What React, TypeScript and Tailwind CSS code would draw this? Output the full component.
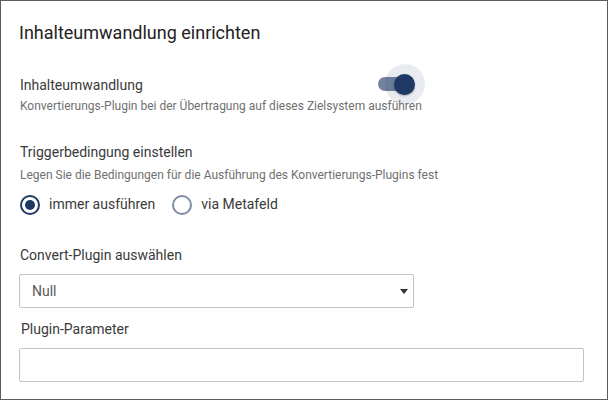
const font = { fontFamily: 'Roboto, "Liberation Sans", sans-serif' }

function Toggle() {
  return (
    <div className="relative w-[47px] h-[40px] shrink-0">
      <div className="absolute left-0 top-[13px] w-[34px] h-[14px] rounded-full bg-[#72839d]" />
      <div className="absolute left-[7px] top-0 w-[40px] h-[40px] rounded-full bg-[#1e3a64]/10" />
      <div className="absolute left-[16px] top-[10px] w-[21px] h-[21px] rounded-full bg-[#1e3a64] shadow-[0_1px_2px_rgba(0,0,0,0.3)]" />
    </div>
  )
}

function Radio({ checked, label }: { checked: boolean; label: string }) {
  return (
    <label className="flex items-center gap-[9px]">
      <span
        className={
          checked
            ? 'w-[20px] h-[20px] rounded-full border-2 border-[#1e3a64] flex items-center justify-center'
            : 'w-[20px] h-[20px] rounded-full border-2 border-[#7d8ca3]'
        }
      >
        {checked && <span className="w-[10px] h-[10px] rounded-full bg-[#1e3a64]" />}
      </span>
      <span className="text-[14px] text-[#3a3a3a]">{label}</span>
    </label>
  )
}

export default function App() {
  return (
    <div style={font} className="w-[608px] h-[400px] border border-[#5c5c5c] bg-white overflow-hidden">
      <div className="pl-[18px] pt-[20px]">
        <h2 className="text-[18px] leading-[24px] text-[#222]">Inhalteumwandlung einrichten</h2>

        <div className="mt-[30px] w-[406px] pl-px">
          <div className="flex items-center justify-between h-[20px]">
            <span className="text-[14px] text-[#3a3a3a]">Inhalteumwandlung</span>
            <div className="-mt-[3px]">
              <Toggle />
            </div>
          </div>
          <div className="mt-[3px] text-[12px] leading-[16px] text-[#707070] whitespace-nowrap">
            Konvertierungs-Plugin bei der Übertragung auf dieses Zielsystem ausführen
          </div>
        </div>

        <div className="mt-[28px] pl-px">
          <div className="text-[14px] leading-[20px] text-[#3a3a3a]">Triggerbedingung einstellen</div>
          <div className="mt-[5px] text-[12px] leading-[16px] text-[#707070]">
            Legen Sie die Bedingungen für die Ausführung des Konvertierungs-Plugins fest
          </div>
          <div className="mt-[11px] flex items-center gap-[17px]">
            <Radio checked label="immer ausführen" />
            <Radio checked={false} label="via Metafeld" />
          </div>
        </div>

        <div className="mt-[30px] pl-px text-[14px] leading-[20px] text-[#3a3a3a]">Convert-Plugin auswählen</div>
        <div className="mt-[9px] w-[395px] h-[34px] border border-[#c4c4c4] rounded-[2px] flex items-center justify-between pl-[12px] pr-[4px]">
          <span className="text-[14px] text-[#5a5a5a]">Null</span>
          <svg width="8" height="5" viewBox="0 0 8 5" className="mr-[1px]">
            <path d="M0 0 L8 0 L4 5 Z" fill="#333" />
          </svg>
        </div>

        <div className="mt-[11px] pl-[2px] text-[14px] leading-[20px] text-[#3a3a3a]">Plugin-Parameter</div>
        <div className="mt-[9px] w-[565px] h-[34px] border border-[#c4c4c4] rounded-[2px]" />
      </div>
    </div>
  )
}
